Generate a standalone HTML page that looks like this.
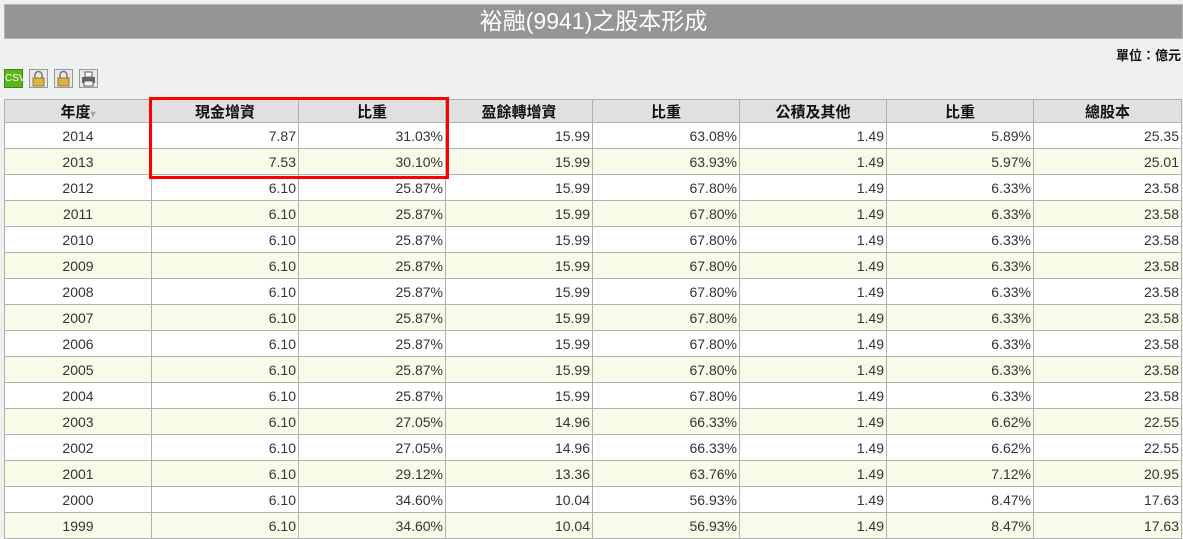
<!DOCTYPE html>
<html><head><meta charset="utf-8"><style>
*{margin:0;padding:0;box-sizing:border-box}
body{width:1183px;height:519px;overflow:hidden;background:#eff1f0;font-family:"Liberation Sans","Noto Sans CJK TC",sans-serif;position:relative}
.title{position:absolute;left:4px;top:4px;width:1179px;height:35px;background:#959595;border:1px solid #b5b5b5;color:#fff;font-size:23px;text-align:center;line-height:33px}
.unit{position:absolute;right:2px;top:45px;font-size:13px;font-weight:bold;color:#111}
.ic{position:absolute;top:69px;width:19px;height:19px;border:1px solid #999;background:#e8e8e8}
table{position:absolute;left:4px;top:99px;border-collapse:collapse;width:1177px;table-layout:fixed}
td,th{border:1px solid #b0b0b0;height:26px;font-size:14px;color:#333;padding:0 2px;text-align:right}
th{height:23px;background:#e0e0e0;text-align:center;font-size:15px;font-weight:bold;color:#111}
td.c{text-align:center}
tr:nth-child(odd) td{background:#fafae8}
tr:nth-child(even) td{background:#fff}
.red{position:absolute;left:149px;top:97px;width:300px;height:82px;border:3px solid #f00}
</style></head><body>
<div class="title">裕融(9941)之股本形成</div>
<div class="unit">單位：億元</div>
<div class="ic" style="left:4px;background:#5cb51a;border-color:#3d8a10;color:#fff;font-size:10px;line-height:17px;text-align:center">CSV</div>
<div class="ic" style="left:29px"><svg width="17" height="17"><path d="M5 8V5a3.5 3.5 0 0 1 7 0v3" fill="none" stroke="#777" stroke-width="1.5"/><rect x="3" y="8" width="11" height="8" fill="#d9b24a" stroke="#9a7a20"/></svg></div>
<div class="ic" style="left:54px"><svg width="17" height="17"><path d="M5 8V5a3.5 3.5 0 0 1 7 0v3" fill="none" stroke="#777" stroke-width="1.5"/><rect x="3" y="8" width="11" height="8" fill="#d9b24a" stroke="#9a7a20"/></svg></div>
<div class="ic" style="left:79px"><svg width="17" height="17"><rect x="5" y="2" width="7" height="5" fill="#fff" stroke="#555"/><rect x="2" y="7" width="13" height="6" fill="#666"/><rect x="4" y="11" width="9" height="5" fill="#fff" stroke="#555"/></svg></div>
<table>
<colgroup><col style="width:147px"><col style="width:147px"><col style="width:147px"><col style="width:147px"><col style="width:147px"><col style="width:147px"><col style="width:147px"><col style="width:148px"></colgroup>
<tr><th>年度<span style="color:#aaa;font-size:10px">▾</span></th><th>現金增資</th><th>比重</th><th>盈餘轉增資</th><th>比重</th><th>公積及其他</th><th>比重</th><th>總股本</th></tr>
<tr><td class="c">2014</td><td>7.87</td><td>31.03%</td><td>15.99</td><td>63.08%</td><td>1.49</td><td>5.89%</td><td>25.35</td></tr>
<tr><td class="c">2013</td><td>7.53</td><td>30.10%</td><td>15.99</td><td>63.93%</td><td>1.49</td><td>5.97%</td><td>25.01</td></tr>
<tr><td class="c">2012</td><td>6.10</td><td>25.87%</td><td>15.99</td><td>67.80%</td><td>1.49</td><td>6.33%</td><td>23.58</td></tr>
<tr><td class="c">2011</td><td>6.10</td><td>25.87%</td><td>15.99</td><td>67.80%</td><td>1.49</td><td>6.33%</td><td>23.58</td></tr>
<tr><td class="c">2010</td><td>6.10</td><td>25.87%</td><td>15.99</td><td>67.80%</td><td>1.49</td><td>6.33%</td><td>23.58</td></tr>
<tr><td class="c">2009</td><td>6.10</td><td>25.87%</td><td>15.99</td><td>67.80%</td><td>1.49</td><td>6.33%</td><td>23.58</td></tr>
<tr><td class="c">2008</td><td>6.10</td><td>25.87%</td><td>15.99</td><td>67.80%</td><td>1.49</td><td>6.33%</td><td>23.58</td></tr>
<tr><td class="c">2007</td><td>6.10</td><td>25.87%</td><td>15.99</td><td>67.80%</td><td>1.49</td><td>6.33%</td><td>23.58</td></tr>
<tr><td class="c">2006</td><td>6.10</td><td>25.87%</td><td>15.99</td><td>67.80%</td><td>1.49</td><td>6.33%</td><td>23.58</td></tr>
<tr><td class="c">2005</td><td>6.10</td><td>25.87%</td><td>15.99</td><td>67.80%</td><td>1.49</td><td>6.33%</td><td>23.58</td></tr>
<tr><td class="c">2004</td><td>6.10</td><td>25.87%</td><td>15.99</td><td>67.80%</td><td>1.49</td><td>6.33%</td><td>23.58</td></tr>
<tr><td class="c">2003</td><td>6.10</td><td>27.05%</td><td>14.96</td><td>66.33%</td><td>1.49</td><td>6.62%</td><td>22.55</td></tr>
<tr><td class="c">2002</td><td>6.10</td><td>27.05%</td><td>14.96</td><td>66.33%</td><td>1.49</td><td>6.62%</td><td>22.55</td></tr>
<tr><td class="c">2001</td><td>6.10</td><td>29.12%</td><td>13.36</td><td>63.76%</td><td>1.49</td><td>7.12%</td><td>20.95</td></tr>
<tr><td class="c">2000</td><td>6.10</td><td>34.60%</td><td>10.04</td><td>56.93%</td><td>1.49</td><td>8.47%</td><td>17.63</td></tr>
<tr><td class="c">1999</td><td>6.10</td><td>34.60%</td><td>10.04</td><td>56.93%</td><td>1.49</td><td>8.47%</td><td>17.63</td></tr>
</table>
<div class="red"></div>
</body></html>
